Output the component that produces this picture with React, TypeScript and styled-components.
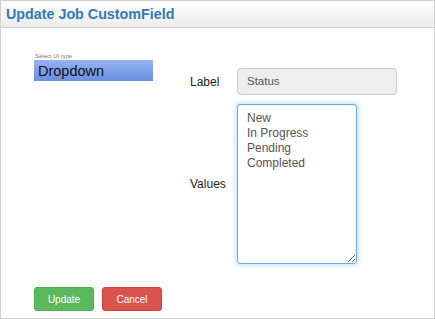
import React from "react";
import styled, { createGlobalStyle } from "styled-components";

const Global = createGlobalStyle`
  html, body { margin: 0; padding: 0; background: #fff; }
  body { font-family: "Liberation Sans", Arial, sans-serif; }
`;

const Card = styled.div`
  width: 435px;
  height: 319px;
  box-sizing: border-box;
  border: 1px solid #cfcfcf;
  display: flex;
  flex-direction: column;
  background: #fff;
`;

const Header = styled.div`
  height: 27px;
  box-sizing: border-box;
  border-bottom: 1px solid #d0d0d0;
  background: linear-gradient(#fdfdfd, #ececec);
  padding: 3px 0 0 5px;
`;

const Title = styled.h1`
  margin: 0;
  font-size: 14.3px;
  font-weight: bold;
  color: #337ab7;
  line-height: 20px;
`;

const Body = styled.div`
  flex: 1;
  display: flex;
  flex-direction: column;
  padding: 24px 0 0 33px;
`;

const Columns = styled.div`
  display: flex;
`;

const LeftCol = styled.div`
  width: 156px;
  display: flex;
  flex-direction: column;
`;

const TinyLabel = styled.div`
  font-size: 6px;
  line-height: 8px;
  color: #8a7866;
  padding-left: 1px;
`;

const Dropdown = styled.div`
  width: 119px;
  height: 21px;
  box-sizing: border-box;
  background: linear-gradient(#93b3f1, #6a8fe1);
  color: #111;
  font-size: 14.5px;
  line-height: 22px;
  padding-left: 4px;
`;

const Form = styled.div`
  margin-top: 16px;
  display: grid;
  grid-template-columns: 47px 160px;
  row-gap: 9px;
  align-items: center;
`;

const FieldLabel = styled.label`
  font-size: 12px;
  color: #222;
`;

const Input = styled.div`
  height: 27px;
  box-sizing: border-box;
  background: #eeeeee;
  border: 1px solid #cccccc;
  border-radius: 4px;
  color: #555;
  font-size: 11.5px;
  line-height: 25px;
  padding-left: 9px;
`;

const TextArea = styled.textarea`
  width: 120px;
  height: 160px;
  box-sizing: border-box;
  border: 1px solid #66afe9;
  border-radius: 3px;
  box-shadow: inset 0 1px 1px rgba(0,0,0,.075), 0 0 6px rgba(102,175,233,.6);
  outline: none;
  font-family: "Liberation Sans", Arial, sans-serif;
  font-size: 12px;
  line-height: 15px;
  color: #555;
  padding: 6px 9px 4px;
  margin: 0;
  resize: both;
`;

const Buttons = styled.div`
  display: flex;
  gap: 8px;
  margin-top: 23px;
`;

const Button = styled.button<{ $variant: "success" | "danger" }>`
  width: 60px;
  height: 24px;
  box-sizing: border-box;
  border-radius: 3px;
  border: 1px solid ${(p) => (p.$variant === "success" ? "#4cae4c" : "#d43f3a")};
  background: ${(p) => (p.$variant === "success" ? "#5cb85c" : "#d9534f")};
  color: #fff;
  font-family: "Liberation Sans", Arial, sans-serif;
  font-size: 10px;
  padding: 0;
`;

export default function App() {
  return (
    <>
      <Global />
      <Card>
        <Header>
          <Title>Update Job CustomField</Title>
        </Header>
        <Body>
          <Columns>
            <LeftCol>
              <TinyLabel>Select UI type</TinyLabel>
              <Dropdown>Dropdown</Dropdown>
            </LeftCol>
            <Form>
              <FieldLabel>Label</FieldLabel>
              <Input>Status</Input>
              <FieldLabel>Values</FieldLabel>
              <TextArea defaultValue={"New\nIn Progress\nPending\nCompleted"} />
            </Form>
          </Columns>
          <Buttons>
            <Button $variant="success">Update</Button>
            <Button $variant="danger">Cancel</Button>
          </Buttons>
        </Body>
      </Card>
    </>
  );
}
